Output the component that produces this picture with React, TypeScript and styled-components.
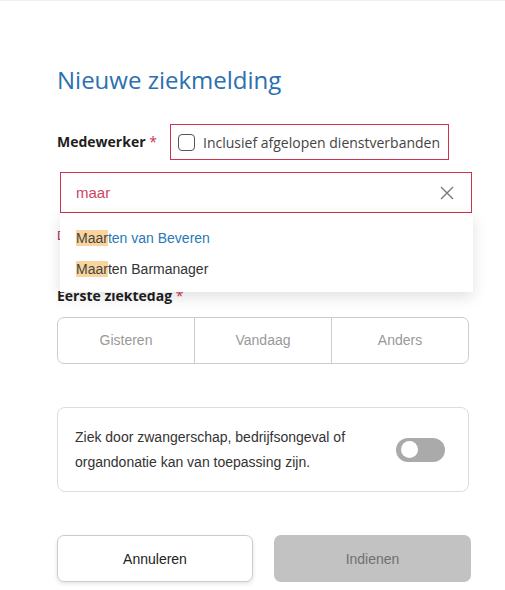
import React from "react";
import styled, { createGlobalStyle } from "styled-components";

const GlobalStyle = createGlobalStyle`
  html, body {
    margin: 0;
    padding: 0;
    background: #ffffff;
    font-family: "Liberation Sans", Arial, sans-serif;
  }
`;

const RED = "#d0304e";

const Modal = styled.div`
  box-sizing: border-box;
  width: 505px;
  min-height: 590px;
  border-top: 1px solid #f0f0f0;
  padding: 63px 36px 8px 57px;
  background: #ffffff;
`;

const Title = styled.h1`
  margin: 0;
  font-family: "Open Sans", sans-serif;
  font-weight: 400;
  font-size: 24px;
  line-height: 32px;
  color: #2b70b0;
`;

const FieldRow = styled.div`
  display: flex;
  align-items: center;
  height: 36px;
  margin-top: 28px;
`;

const Label = styled.label<{ $width?: number }>`
  display: block;
  width: ${(p) => (p.$width ? `${p.$width}px` : "auto")};
  font-family: "Open Sans", sans-serif;
  font-weight: 700;
  font-size: 14px;
  line-height: 20px;
  color: #1e1e1e;

  span {
    color: ${RED};
    font-weight: 400;
  }
`;

const CheckboxBox = styled.div`
  box-sizing: border-box;
  display: flex;
  align-items: center;
  gap: 8px;
  height: 36px;
  padding: 0 8px 0 7px;
  border: 1px solid ${RED};
  font-family: "Open Sans", sans-serif;
  font-size: 14px;
  color: #444;
`;

const Checkbox = styled.span`
  box-sizing: border-box;
  width: 17px;
  height: 17px;
  border: 1.5px solid #555;
  border-radius: 4px;
`;

const SearchWrap = styled.div`
  position: relative;
  margin: 12px 0 0 3px;
  width: 412px;
`;

const SearchInput = styled.div`
  box-sizing: border-box;
  display: flex;
  align-items: center;
  justify-content: space-between;
  height: 41px;
  padding: 0 17px 0 15px;
  border: 1px solid ${RED};
  font-size: 15px;
  color: #cc4461;
`;

const Dropdown = styled.ul`
  position: absolute;
  top: 100%;
  left: 0;
  width: 413px;
  margin: 0;
  padding: 10px 0 7px;
  list-style: none;
  background: #ffffff;
  box-shadow: 0 5px 14px rgba(0, 0, 0, 0.12);
  z-index: 2;
`;

const Option = styled.li<{ $active?: boolean }>`
  padding-left: 16px;
  font-size: 14px;
  line-height: 31px;
  color: ${(p) => (p.$active ? "#2a78b6" : "#333")};

  mark {
    background: #f9d49c;
    color: #444;
  }
`;

const ErrorText = styled.div`
  margin-top: 14px;
  font-size: 13px;
  line-height: 18px;
  color: #a8306a;
`;

const SectionLabel = styled(Label)`
  margin-top: 41px;
`;

const Segmented = styled.div`
  display: grid;
  grid-template-columns: 136px 1fr 1fr;
  height: 47px;
  margin-top: 11px;
  border: 1px solid #cccccc;
  border-radius: 7px;
  box-sizing: border-box;
  overflow: hidden;
`;

const Segment = styled.div`
  display: flex;
  align-items: center;
  justify-content: center;
  padding-bottom: 1px;
  font-size: 14px;
  color: #999;

  & + & {
    border-left: 1px solid #cccccc;
  }
`;

const Card = styled.div`
  box-sizing: border-box;
  display: flex;
  align-items: center;
  justify-content: space-between;
  gap: 20px;
  height: 85px;
  margin-top: 43px;
  padding: 0 23px 0 17px;
  border: 1px solid #dddddd;
  border-radius: 8px;
`;

const CardText = styled.p`
  margin: 0;
  font-size: 14px;
  line-height: 25px;
  color: #333;
`;

const Toggle = styled.div`
  position: relative;
  flex: none;
  width: 49px;
  height: 24px;
  border-radius: 12px;
  background: #aaaaaa;

  &::after {
    content: "";
    position: absolute;
    top: 3.5px;
    left: 5px;
    width: 17px;
    height: 17px;
    border-radius: 50%;
    background: #ffffff;
  }
`;

const Actions = styled.div`
  display: grid;
  grid-template-columns: 196px 197px;
  gap: 21px;
  margin-top: 43px;
`;

const Button = styled.button<{ $primary?: boolean }>`
  box-sizing: border-box;
  height: 47px;
  border-radius: 7px;
  font-family: "Liberation Sans", Arial, sans-serif;
  font-size: 14px;
  border: ${(p) => (p.$primary ? "none" : "1px solid #cccccc")};
  background: ${(p) => (p.$primary ? "#c2c2c2" : "#ffffff")};
  color: ${(p) => (p.$primary ? "#707070" : "#222")};
  box-shadow: ${(p) => (p.$primary ? "none" : "0 2px 4px rgba(0,0,0,0.1)")};
`;

const CloseIcon = () => (
  <svg width="14" height="14" viewBox="0 0 14 14" fill="none">
    <path d="M1 1L13 13M13 1L1 13" stroke="#777" strokeWidth="1.4" />
  </svg>
);

export default function App() {
  return (
    <>
      <GlobalStyle />
      <Modal>
        <Title>Nieuwe ziekmelding</Title>

        <FieldRow>
          <Label $width={113}>
            Medewerker <span>*</span>
          </Label>
          <CheckboxBox>
            <Checkbox />
            Inclusief afgelopen dienstverbanden
          </CheckboxBox>
        </FieldRow>

        <SearchWrap>
          <SearchInput>
            maar
            <CloseIcon />
          </SearchInput>
          <Dropdown>
            <Option $active>
              <mark>Maar</mark>ten van Beveren
            </Option>
            <Option>
              <mark>Maar</mark>ten Barmanager
            </Option>
          </Dropdown>
        </SearchWrap>

        <ErrorText>De medewerker is verplicht</ErrorText>

        <SectionLabel>
          Eerste ziektedag <span>*</span>
        </SectionLabel>
        <Segmented>
          <Segment>Gisteren</Segment>
          <Segment>Vandaag</Segment>
          <Segment>Anders</Segment>
        </Segmented>

        <Card>
          <CardText>
            Ziek door zwangerschap, bedrijfsongeval of organdonatie kan van
            toepassing zijn.
          </CardText>
          <Toggle />
        </Card>

        <Actions>
          <Button>Annuleren</Button>
          <Button $primary>Indienen</Button>
        </Actions>
      </Modal>
    </>
  );
}
